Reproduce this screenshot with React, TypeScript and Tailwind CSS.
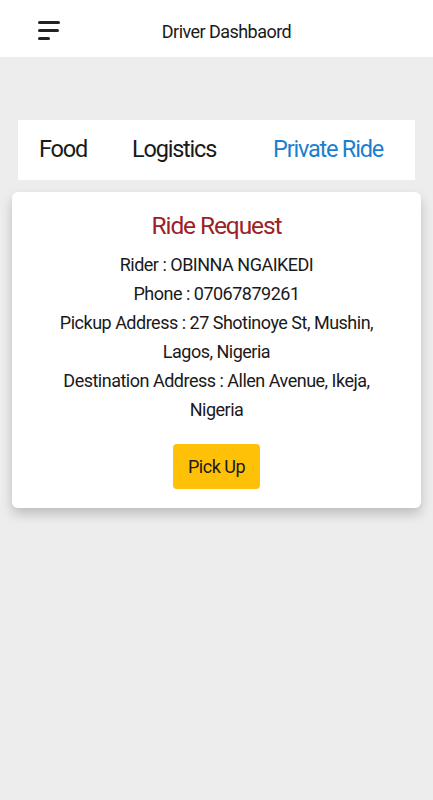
export default function App() {
    const lines = [
        'Rider : OBINNA NGAIKEDI',
        'Phone : 07067879261',
        'Pickup Address : 27 Shotinoye St, Mushin, Lagos, Nigeria',
        'Destination Address : Allen Avenue, Ikeja, Nigeria',
    ]

    return (
        <div className="min-h-[800px] w-[433px] bg-[#ededed] font-['Roboto',sans-serif] text-[#1a1a1a]">
            <header className="relative flex h-[57px] items-center justify-center bg-white pt-[7px]">
                <button className="absolute left-[38px] top-[21px] flex flex-col gap-[5px]">
                    <span className="block h-[3px] w-[22px] rounded-sm bg-[#222]" />
                    <span className="block h-[3px] w-[21px] rounded-sm bg-[#222]" />
                    <span className="block h-[3px] w-[12px] rounded-sm bg-[#222]" />
                </button>
                <h1 className="ml-[20px] text-[18px] leading-[24px] tracking-[-0.55px] text-[#1a1a1a]">Driver Dashbaord</h1>
            </header>

            <div className="mx-[18px] mt-[63px] flex h-[60px] items-center bg-white pl-[21px] text-[23.5px] tracking-[-1.2px]">
                <span className="w-[93px]">Food</span>
                <span className="w-[141px]">Logistics</span>
                <span className="text-[#1a7fd0]">Private Ride</span>
            </div>

            <div className="mx-[12px] mt-[12px] flex flex-col items-center rounded-md bg-white px-[30px] pb-[19px] pt-[12px] shadow-[0_6px_12px_rgba(0,0,0,0.2)]">
                <h2 className="text-[24.5px] leading-[44px] tracking-[-1.1px] text-[#9b2226]">Ride Request</h2>
                <div className="mt-[2px] text-center text-[18px] leading-[29px] tracking-[-0.5px]">
                    {lines.map((line) => (
                        <p key={line} className="mx-auto max-w-[320px]">{line}</p>
                    ))}
                </div>
                <button className="mt-[20px] h-[45px] rounded bg-[#ffc107] px-[15px] text-[18px] tracking-[-0.5px] text-[#1a1a1a]">
                    Pick Up
                </button>
            </div>
        </div>
    )
}
